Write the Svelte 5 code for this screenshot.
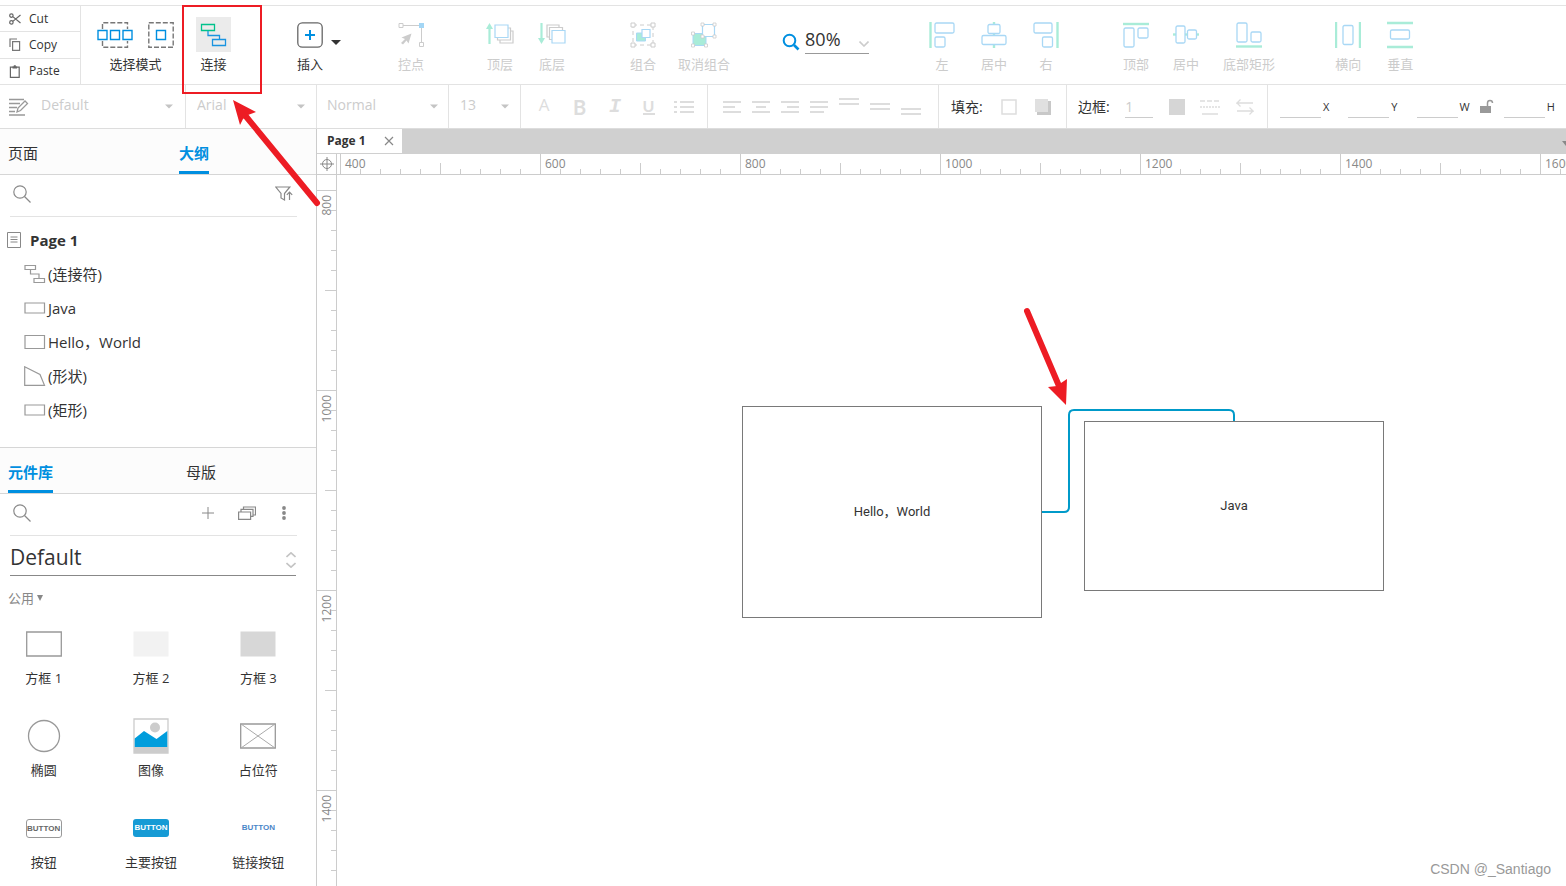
<script>
  let zoom = '80%'
  let library = 'Default'
  let width = 0
  let height = 0

  const outline = [
    { icon: 'connector', name: '(连接符)' },
    { icon: 'flat', name: 'Java' },
    { icon: 'rect', name: 'Hello，World' },
    { icon: 'shape', name: '(形状)' },
    { icon: 'flat', name: '(矩形)' }
  ]

  const widgets = [
    { icon: 'box1', name: '方框 1' },
    { icon: 'box2', name: '方框 2' },
    { icon: 'box3', name: '方框 3' },
    { icon: 'ellipse', name: '椭圆' },
    { icon: 'image', name: '图像' },
    { icon: 'placeholder', name: '占位符' },
    { icon: 'button', name: '按钮' },
    { icon: 'primary', name: '主要按钮' },
    { icon: 'link', name: '链接按钮' }
  ]

  // one tick every 20px, a label every 200px
  function ticks(offset, first, length) {
    return Array.from({ length: Math.max(0, Math.ceil((length - offset) / 20)) }, (_, i) => ({
      at: offset + i * 20,
      label: i % 10 === 0 ? first + i * 20 : null,
      size: i % 10 === 0 ? 20 : i % 5 === 0 ? 11 : 5
    }))
  }

  $: across = ticks(3, 400, width - 20)
  $: down = ticks(15, 800, height - 21)

  const alignX = [
    { name: '左', icon: 'left' },
    { name: '居中', icon: 'center' },
    { name: '右', icon: 'right' }
  ]
  const alignY = [
    { name: '顶部', icon: 'top' },
    { name: '居中', icon: 'middle' },
    { name: '底部矩形', icon: 'bottom' }
  ]
  const textAlign = [
    { name: 'Align left', d: 'M0 2h18M0 7h12M0 12h18' },
    { name: 'Align center', d: 'M0 2h18M4 7h10M0 12h18' },
    { name: 'Align right', d: 'M0 2h18M6 7h12M0 12h18' },
    { name: 'Justify', d: 'M0 2h18M0 7h18M0 12h14' }
  ]
  const verticalAlign = [
    { name: 'Align top', d: 'M0 1h20M0 6h20' },
    { name: 'Align middle', d: 'M0 6h20M0 11h20' },
    { name: 'Align bottom', d: 'M0 11h20M0 16h20' }
  ]
</script>

{#snippet caret()}
  <svg class="caret" width="10" height="5" viewBox="0 0 10 5"><path d="M0 0h10L5 5z" fill="currentColor" /></svg>
{/snippet}

{#snippet search()}
  <svg width="18" height="18" viewBox="0 0 18 18" fill="none" stroke="#8a8a8a" stroke-width="1.2">
    <circle cx="7" cy="7" r="6.2" /><path d="M11.5 11.5l6 6" />
  </svg>
{/snippet}

<div class="app">
  <header class="toolbar">
    <div class="clipboard">
      <button>
        <svg width="12" height="12" viewBox="0 0 12 12" fill="none" stroke="#666" stroke-width="1.2">
          <circle cx="2.4" cy="2.6" r="1.7" /><circle cx="2.4" cy="9.4" r="1.7" /><path d="M3.8 3.6L11.5 10M3.8 8.4L11.5 2" />
        </svg>
        Cut
      </button>
      <button>
        <svg width="12" height="13" viewBox="0 0 12 13" fill="none" stroke="#777" stroke-width="1.2">
          <path d="M1 9V1h7M3.6 3.6h7v8.8h-7z" />
        </svg>
        Copy
      </button>
      <button>
        <svg width="12" height="13" viewBox="0 0 12 13" fill="none" stroke="#666" stroke-width="1.2">
          <path d="M1.4 2.2h8.8v10.2H1.4z" /><path d="M3.5 2.4h4.6M5.8.2v2" stroke-width="2" />
        </svg>
        Paste
      </button>
    </div>

    <button class="tool modes">
      <span class="icon">
        <svg width="36" height="26" viewBox="0 0 36 26" fill="none">
          <path d="M5.5 7V.8h25V7M5.5 19v6.2h25V19" stroke="#777" stroke-width="1.4" stroke-dasharray="5 2" />
          <path d="M1 8.5h9v9H1zM13.5 8.5h9v9h-9zM26 8.5h9v9h-9z" stroke="#008fe0" stroke-width="1.4" />
        </svg>
        <svg width="26" height="26" viewBox="0 0 26 26" fill="none">
          <path d="M.8.8h24.4v24.4H.8z" stroke="#777" stroke-width="1.4" stroke-dasharray="5 2" />
          <path d="M8.5 8.5h9v9h-9z" stroke="#008fe0" stroke-width="1.4" />
        </svg>
      </span>
      选择模式
    </button>

    <button class="tool connect">
      <span class="icon active">
        <svg width="35" height="35" viewBox="0 0 35 35" fill="none" stroke-width="1.3">
          <path d="M5.5 7.5h13v6h-13z" stroke="#00c28c" />
          <path d="M12 14v4.5h11.500V22M16.500 22.500h13v6h-13z" stroke="#1a94e0" />
        </svg>
      </span>
      连接
    </button>

    <div class="group insert">
      <button class="tool">
        <span class="icon">
          <svg width="26" height="26" viewBox="0 0 26 26" fill="none">
            <rect x=".8" y=".8" width="24.4" height="24.4" rx="4.5" stroke="#666" stroke-width="1.3" />
            <path d="M13 8v10M8 13h10" stroke="#008fe0" stroke-width="2" />
          </svg>
        </span>
        插入
      </button>
      <button class="more" aria-label="插入">{@render caret()}</button>
    </div>

    <div class="group">
      <button class="tool" disabled>
        <span class="icon">
          <svg width="26" height="26" viewBox="0 0 26 26" fill="none" stroke="#ccc">
            <path d="M5 3.5h16M23.5 6v15" /><path d="M1 1.5h4v4H1zM21.5 20.5h4v4h-4z" />
            <path d="M21 1h5v5h-5z" fill="#a3d6f5" stroke="none" />
            <path d="M13.5 11.5l-10 4 3.5 1.5-4 4 2 1.5 3.5-4 2 3z" fill="#ccc" stroke="none" />
          </svg>
        </span>
        控点
      </button>
    </div>

    <div class="group layers">
      <button class="tool" disabled>
        <span class="icon">
          <svg width="28" height="26" viewBox="0 0 28 26" fill="#fff" stroke-width="1.2">
            <path d="M14 9h13v12H14z" stroke="#ccc" /><path d="M11.5 6h13v12h-13z" stroke="#ccc" /><path d="M9 3h13v12.5H9z" stroke="#a9d8f5" />
            <path d="M3.5 22V6" stroke="#a9ecd8" stroke-width="2.2" /><path d="M0 7l3.5-6L7 7z" fill="#a9ecd8" />
          </svg>
        </span>
        顶层
      </button>
      <button class="tool" disabled>
        <span class="icon">
          <svg width="28" height="26" viewBox="0 0 28 26" fill="#fff" stroke-width="1.2">
            <path d="M9 3h12v12H9z" stroke="#ccc" /><path d="M11.5 5.5h13v12h-13z" stroke="#ccc" /><path d="M14 8.5h13V21H14z" stroke="#a9d8f5" />
            <path d="M3.5 1v16" stroke="#a9ecd8" stroke-width="2.2" /><path d="M0 16l3.5 6L7 16z" fill="#a9ecd8" />
          </svg>
        </span>
        底层
      </button>
    </div>

    <div class="group combine">
      <button class="tool" disabled>
        <span class="icon">
          <svg width="26" height="26" viewBox="0 0 26 26" fill="#fff">
            <path d="M3 3h20v20H3z" stroke="#ccc" stroke-dasharray="4 3" />
            <path d="M6.5 11h9v8h-9z" fill="#a9ecd8" stroke="#a9d8f5" /><path d="M12 7.5h8v8h-8z" stroke="#a9d8f5" stroke-width="1.2" />
            <path d="M1 1h4v4H1zM21 1h4v4h-4zM1 21h4v4H1zM21 21h4v4h-4z" stroke="#ccc" />
          </svg>
        </span>
        组合
      </button>
      <button class="tool" disabled>
        <span class="icon">
          <svg width="26" height="26" viewBox="0 0 26 26" fill="#fff">
            <path d="M2 11.5h13v12H2z" fill="#a9ecd8" stroke="#a9d8f5" /><path d="M11.5 2.5h12v12h-12z" stroke="#a9d8f5" stroke-width="1.2" />
            <path d="M10 1h3v3h-3zM22 1h3v3h-3zM10 13h3v3h-3zM22 13h3v3h-3zM.5 10h3v3h-3zM.5 22h3v3h-3zM13.5 22h3v3h-3z" stroke="#ccc" stroke-width=".8" />
          </svg>
        </span>
        取消组合
      </button>
    </div>

    <div class="zoom">
      <svg width="18" height="18" viewBox="0 0 18 18" fill="none" stroke="#008fe0">
        <circle cx="7.5" cy="7.5" r="5.8" stroke-width="2" /><path d="M12 12l4.5 4.5" stroke-width="2.6" />
      </svg>
      <span class="zoom-box">
        <input aria-label="Zoom" bind:value={zoom}>
        <svg width="10" height="6" viewBox="0 0 10 6" fill="none" stroke="#ccc" stroke-width="1.6"><path d="M.5.5L5 5 9.5.5" /></svg>
      </span>
    </div>

    {#each [alignX, alignY] as set, i}
      <div class="group" class:near={i == 0} class:edges={i == 1}>
        {#each set as item}
          <button class="tool" disabled>
            <span class="icon">
              <svg width="26" height="26" viewBox="0 0 26 26" fill="#fff" stroke="#a9d8f5" stroke-width="1.3">
                {#if item.icon == 'left'}
                  <path d="M1.5 0v26" stroke="#a9ecd8" stroke-width="2.4" />
                  <rect x="6" y="1" width="19" height="10" rx="1.5" /><rect x="6" y="15" width="10" height="10" rx="1.5" />
                {:else if item.icon == 'center'}
                  <path d="M13 0v26" stroke="#a9ecd8" stroke-width="2.4" />
                  <rect x="7" y="2.5" width="12" height="9" rx="1.5" /><rect x="1" y="13.5" width="24" height="9" rx="1.5" />
                {:else if item.icon == 'right'}
                  <path d="M24.5 0v26" stroke="#a9ecd8" stroke-width="2.4" />
                  <rect x="1" y="1" width="18" height="10" rx="1.5" /><rect x="9.5" y="15" width="10" height="10" rx="1.5" />
                {:else if item.icon == 'top'}
                  <path d="M0 2h26" stroke="#a9ecd8" stroke-width="2.4" />
                  <rect x="1" y="6" width="10" height="19" rx="1.5" /><rect x="15" y="6" width="10" height="10" rx="1.5" />
                {:else if item.icon == 'middle'}
                  <path d="M0 12.5h26" stroke="#a9ecd8" stroke-width="2.4" />
                  <rect x="3" y="4" width="9" height="17" rx="1.5" /><rect x="14.5" y="8" width="9" height="9" rx="1.5" />
                {:else}
                  <path d="M0 24.5h26" stroke="#a9ecd8" stroke-width="2.4" />
                  <rect x="1" y="1" width="10" height="19" rx="1.5" /><rect x="15" y="10" width="10" height="10" rx="1.5" />
                {/if}
              </svg>
            </span>
            {item.name}
          </button>
        {/each}
      </div>
    {/each}

    <div class="group near">
      <button class="tool" disabled>
        <span class="icon">
          <svg width="26" height="26" viewBox="0 0 26 26" fill="none">
            <path d="M1 0v26M25 0v26" stroke="#a9ecd8" stroke-width="2.4" />
            <rect x="8" y="3.5" width="10" height="19" rx="1.5" stroke="#a9d8f5" stroke-width="1.3" />
          </svg>
        </span>
        横向
      </button>
      <button class="tool" disabled>
        <span class="icon">
          <svg width="26" height="28" viewBox="0 0 26 28" fill="none">
            <path d="M0 2h26M0 26h26" stroke="#a9ecd8" stroke-width="2.4" />
            <rect x="3.5" y="9" width="19" height="9" rx="1.5" stroke="#a9d8f5" stroke-width="1.3" />
          </svg>
        </span>
        垂直
      </button>
    </div>
  </header>

  <div class="stylebar">
    <div class="cell style-name">
      <svg width="20" height="18" viewBox="0 0 20 18" fill="none" stroke="#999" stroke-width="1.3">
        <path d="M0 1.5h15M0 5.5h11M0 9.5h8M0 13.5h6M0 17h16" />
        <path d="M8 14l1-4L16 3l2.5 2.5-7 7z" fill="#fff" />
      </svg>
      <select disabled aria-label="Style"><option>Default</option></select>{@render caret()}
    </div>
    <div class="cell font-name"><select disabled aria-label="Font"><option>Arial</option></select>{@render caret()}</div>
    <div class="cell font-weight"><select disabled aria-label="Weight"><option>Normal</option></select>{@render caret()}</div>
    <div class="cell font-size"><select disabled aria-label="Size"><option>13</option></select>{@render caret()}</div>
    <div class="cell letters">
      <button disabled class="color">A</button>
      <button disabled class="bold">B</button>
      <button disabled class="italic">I</button>
      <button disabled class="underline">U</button>
      <button disabled aria-label="List">
        <svg width="20" height="14" viewBox="0 0 20 14" stroke="#ddd" stroke-width="2.2">
          <path d="M6 2h14M6 7h14M6 12h14M0 2h3M0 7h3M0 12h3" />
        </svg>
      </button>
    </div>
    <div class="cell aligns">
      {#each textAlign as a}
        <button disabled aria-label={a.name}><svg width="18" height="14" viewBox="0 0 18 14" stroke="#ddd" stroke-width="2"><path d={a.d} /></svg></button>
      {/each}
      {#each verticalAlign as a}
        <button disabled aria-label={a.name}><svg width="20" height="18" viewBox="0 0 20 18" stroke="#ddd" stroke-width="2"><path d={a.d} /></svg></button>
      {/each}
    </div>
    <div class="cell fill">
      填充:
      <button disabled aria-label="Fill"><svg width="16" height="16" viewBox="0 0 16 16"><path d="M1 1h14v14H1z" fill="none" stroke="#ddd" stroke-width="1.5" /></svg></button>
      <button disabled aria-label="Shadow"><svg width="16" height="16" viewBox="0 0 16 16"><path d="M2 2h14v14H2z" fill="#c8c8c8" /><path d="M0 0h13v13H0z" fill="#e0e0e0" /></svg></button>
    </div>
    <div class="cell border">
      <label for="border-width">边框:</label>
      <input id="border-width" disabled value="1">
      <button disabled aria-label="Border color"><svg width="16" height="16" viewBox="0 0 16 16"><path d="M0 0h16v16H0z" fill="#d6d6d6" /></svg></button>
      <button disabled aria-label="Border style">
        <svg width="20" height="16" viewBox="0 0 20 16" stroke="#ddd" stroke-width="1.5">
          <path d="M0 2h20" stroke-dasharray="5 2" /><path d="M0 8h20" stroke-dasharray="2 1" /><path d="M2 15h16" />
        </svg>
      </button>
      <button disabled aria-label="Line ends">
        <svg width="18" height="16" viewBox="0 0 18 16" fill="none" stroke="#ddd" stroke-width="1.3">
          <path d="M17 4H1l3.5-3.5M1 4l3.5 3.5M1 12h16l-3.5-3.5M17 12l-3.5 3.5" />
        </svg>
      </button>
    </div>
    <div class="cell position">
      <label><input disabled>X</label>
      <label><input disabled>Y</label>
      <label><input disabled>W</label>
      <button class="lock" disabled aria-label="Lock ratio">
        <svg width="14" height="15" viewBox="0 0 14 15"><path d="M0 7h11v7H0z" fill="#999" /><path d="M7.5 7V4c0-3.5 5-3.5 5 0" fill="none" stroke="#999" stroke-width="1.5" /></svg>
      </button>
      <label><input disabled>H</label>
    </div>
  </div>

  <div class="workspace">
    <aside>
      <nav class="tabs">
        <button>页面</button>
        <button class="current">大纲</button>
      </nav>
      <div class="searchbar">
        <button aria-label="Search">{@render search()}</button>
        <span class="grow"></span>
        <button aria-label="Filter">
          <svg width="18" height="16" viewBox="0 0 18 16" fill="none" stroke="#888" stroke-width="1.2">
            <path d="M.8 1h14L9.5 7.5V14L6 12V7.5z" /><path d="M14.5 14V6M11.8 8.8L14.5 6l2.7 2.8" />
          </svg>
        </button>
      </div>
      <ul class="outline">
        <li class="page">
          <svg width="14" height="16" viewBox="0 0 14 16" fill="none" stroke="#888"><path d="M.5.5h13v15H.5z" /><path d="M3.5 5h7M3.5 7.5h7M3.5 10h7" /></svg>
          Page 1
        </li>
        {#each outline as item}
          <li>
            <svg width="22" height="20" viewBox="0 0 22 20" fill="none" stroke="#999" stroke-width="1.2">
              {#if item.icon == 'connector'}
                <path d="M1 1.5h10.5v4H1zM6.5 5.5v4.5H15v4M10 14.5h10.5v4H10z" />
              {:else if item.icon == 'flat'}
                <path d="M1 5h19.5v10H1z" />
              {:else if item.icon == 'rect'}
                <path d="M1 3.5h19.5v13H1z" />
              {:else}
                <path d="M.7.7L16 8.5 20.5 19.3H.7z" />
              {/if}
            </svg>
            {item.name}
          </li>
        {/each}
      </ul>

      <nav class="tabs lower">
        <button class="current">元件库</button>
        <button>母版</button>
      </nav>
      <div class="searchbar">
        <button aria-label="Search">{@render search()}</button>
        <span class="grow"></span>
        <button aria-label="Add"><svg width="12" height="12" viewBox="0 0 12 12" stroke="#888"><path d="M6 0v12M0 6h12" /></svg></button>
        <button aria-label="Libraries" class="stack">
          <svg width="18" height="14" viewBox="0 0 18 14" fill="#fff" stroke="#888" stroke-width="1.2"><path d="M5.5 1h12v8h-12z" /><path d="M3 3.3h12v7H3z" /><path d="M.6 6h12v7.4H.6z" /></svg>
        </button>
        <button aria-label="More" class="dots">
          <svg width="4" height="14" viewBox="0 0 4 14" fill="#888"><circle cx="2" cy="2" r="1.9" /><circle cx="2" cy="7" r="1.9" /><circle cx="2" cy="12" r="1.9" /></svg>
        </button>
      </div>
      <div class="library">
        <select aria-label="Library" bind:value={library}><option>Default</option></select>
        <svg width="10" height="16" viewBox="0 0 10 16" fill="none" stroke="#c4c4c4" stroke-width="1.6"><path d="M.5 5L5 .8 9.5 5M.5 11L5 15.2 9.5 11" /></svg>
      </div>
      <button class="category">公用 <svg width="6" height="6" viewBox="0 0 6 6"><path d="M0 0h6L3 6z" fill="#888" /></svg></button>
      <ul class="widgets">
        {#each widgets as w}
          <li>
            {#if w.icon == 'button' || w.icon == 'primary' || w.icon == 'link'}
              <span class="sample"><b class={w.icon}>BUTTON</b></span>
            {:else}
              <svg class="sample" width="36" height="36" viewBox="0 0 36 36" fill="none" stroke="#999" stroke-width="1.3">
                {#if w.icon == 'box1'}
                  <path d="M.7 6h34.6v24H.7z" />
                {:else if w.icon == 'box2'}
                  <path d="M.5 5.5h35v25H.5z" fill="#f2f2f2" stroke="none" />
                {:else if w.icon == 'box3'}
                  <path d="M.5 5.5h35v25H.5z" fill="#d7d7d7" stroke="none" />
                {:else if w.icon == 'ellipse'}
                  <circle cx="18" cy="18" r="15.5" />
                {:else if w.icon == 'image'}
                  <path d="M1 1h34v34H1z" stroke="#ccc" /><path d="M1 29h34v6H1z" fill="#ccc" stroke="none" />
                  <circle cx="22" cy="9.5" r="5" fill="#ccc" stroke="none" />
                  <path d="M1.7 20.5L11 13l12.5 8L34.3 13v16H1.7z" fill="#009ddc" stroke="none" />
                {:else}
                  <path d="M.7 6h34.6v24H.7z" /><path d="M1 6l34 24M35 6L1 30" stroke-width="1" stroke="#aaa" />
                {/if}
              </svg>
            {/if}
            {w.name}
          </li>
        {/each}
      </ul>
    </aside>

    <main>
      <div class="pages">
        <div class="page-tab">
          Page 1
          <button aria-label="Close"><svg width="10" height="10" viewBox="0 0 10 10" stroke="#888" stroke-width="1.2"><path d="M1 1l8 8M9 1L1 9" /></svg></button>
        </div>
        <button class="page-menu" aria-label="Pages"><svg width="4" height="5" viewBox="0 0 4 5"><path d="M0 0h4v5z" fill="#888" /></svg></button>
      </div>
      <div class="rulers" bind:clientWidth={width} bind:clientHeight={height}>
        <div class="corner">
          <svg width="14" height="14" viewBox="0 0 14 14" fill="none" stroke="#888"><circle cx="7" cy="7" r="4.5" /><path d="M7 0v14M0 7h14" /></svg>
        </div>
        <svg class="ruler-x">
          {#each across as t}
            <path d="M{t.at}.5 {20 - t.size}v{t.size}" />
            {#if t.label}<text x={t.at + 5} y="14">{t.label}</text>{/if}
          {/each}
        </svg>
        <svg class="ruler-y">
          {#each down as t}
            <path d="M{19 - t.size} {t.at}.5h{t.size}" />
            {#if t.label}<text transform="translate(14 {t.at + 5}) rotate(-90)" text-anchor="end">{t.label}</text>{/if}
          {/each}
        </svg>
        <div class="canvas">
          <svg class="wire" width="194" height="107" viewBox="0 0 194 107" fill="none" stroke="#009ac9" stroke-width="2">
            <path d="M0 105h22q5 0 5-5V8q0-5 5-5h155q5 0 5 5v7" />
          </svg>
          <div class="node hello">Hello，World</div>
          <div class="node java">Java</div>
        </div>
      </div>
      <div class="watermark">CSDN @_Santiago</div>
    </main>
  </div>

  <svg class="marks" width="1100" height="420" viewBox="0 0 1100 420" fill="#ed1c24" stroke="#ed1c24" aria-hidden="true">
    <path d="M183 6h78v87h-78z" fill="none" stroke-width="2" />
    <path d="M317 203L244 114M1027 311L1059 386" stroke-width="6" stroke-linecap="round" />
    <path d="M233 100l23 12-8 3-5 4-3 6zM1066 405l-18-18 9-1 4-3 6-4z" stroke="none" />
  </svg>
</div>

<style>
:global(body) {
  margin: 0;
}

.app {
  position: relative;
  box-sizing: border-box;
  display: flex;
  flex-direction: column;
  min-height: 100vh;
  padding-top: 5px;
  overflow: hidden;
  background: #fff;
  color: #333;
  font: 13px/20px "Open Sans", "Noto Sans CJK SC", sans-serif;
}

button, input, select {
  margin: 0;
  padding: 0;
  border: 0;
  background: none;
  color: inherit;
  font: inherit;
}

select {
  appearance: none;
  opacity: 1;
}

svg {
  display: block;
  flex: none;
}

ul {
  margin: 0;
  padding: 0;
  list-style: none;
}

.toolbar {
  display: flex;
  height: 78px;
  border-top: 1px solid #e3e3e3;
  border-bottom: 1px solid #e3e3e3;
}

.clipboard {
  display: flex;
  flex-direction: column;
  width: 80px;
  border-right: 1px solid #e3e3e3;
  font-size: 12px;
}

.clipboard button {
  display: flex;
  flex: 1;
  align-items: center;
  gap: 8px;
  padding-left: 9px;
}

.clipboard button + button {
  border-top: 1px solid #e3e3e3;
}

.tool {
  display: flex;
  flex: none;
  flex-direction: column;
  align-items: center;
  padding-top: 11px;
  white-space: nowrap;
}

.tool:disabled {
  color: #ccc;
}

.icon {
  display: flex;
  align-items: center;
  justify-content: center;
  gap: 15px;
  height: 35px;
  margin-bottom: 2px;
}

.active {
  background: #ebebeb;
}

.modes {
  margin-left: 16px;
}

.connect {
  margin-left: 22px;
}

.group {
  display: flex;
  flex: none;
  align-items: flex-start;
  gap: 26px;
  margin-left: 64px;
}

.group.insert {
  gap: 8px;
  margin-left: 66px;
}

.insert + .group {
  margin-left: 57px;
}

.group.layers {
  gap: 24px;
  margin-left: 62px;
}

.group.combine {
  gap: 22px;
}

.group.near {
  margin-left: 60px;
}

.group.edges {
  gap: 24px;
}

.more {
  padding-top: 34px;
}

.zoom {
  display: flex;
  align-items: flex-start;
  gap: 5px;
  margin-left: 52px;
  padding-top: 20px;
}

.zoom > svg {
  margin-top: 7px;
}

.zoom-box {
  display: flex;
  align-items: center;
  border-bottom: 1px solid #999;
}

.zoom-box input {
  width: 54px;
  height: 25px;
  padding-bottom: 2px;
  font-size: 18px;
}

.zoom-box svg {
  margin-top: 8px;
}

.stylebar {
  display: flex;
  height: 43px;
  border-bottom: 1px solid #ddd;
}

.cell {
  box-sizing: border-box;
  display: flex;
  flex: none;
  align-items: center;
  border-right: 1px solid #e3e3e3;
}

.cell select {
  flex: 1;
  min-width: 0;
  height: 40px;
  margin-bottom: 3px;
  color: #ccc;
  font-size: 14px;
}

.cell .caret {
  width: 8px;
  color: #c4c4c4;
}

.style-name {
  width: 186px;
  gap: 12px;
  padding: 0 12px 0 9px;
}

.font-name {
  width: 131px;
  padding: 0 11px;
}

.font-weight {
  width: 132px;
  padding: 0 10px;
}

.font-size {
  width: 72px;
  padding: 0 11px;
}

.letters {
  width: 187px;
  justify-content: space-between;
  padding: 0 13px 0 15px;
  color: #ddd;
}

.letters button {
  width: 16px;
  text-align: center;
}

.letters button:last-child {
  width: 20px;
}

.color {
  padding-bottom: 4px;
  font-size: 17px;
}

.bold {
  font: bold 20px/20px Lato, sans-serif;
}

.italic {
  font: italic bold 20px/20px "Liberation Mono", monospace;
}

.letters .underline {
  width: 12px;
  border-bottom: 2px solid #ddd;
  font: bold 16px/14px Lato, sans-serif;
}

.aligns {
  width: 231px;
  justify-content: space-between;
  padding: 0 17px 0 15px;
}

.fill {
  width: 128px;
  justify-content: space-between;
  padding: 0 15px 0 12px;
  font-size: 14px;
}

.border {
  width: 201px;
  justify-content: space-between;
  padding: 0 13px 0 11px;
  font-size: 14px;
}

.border input {
  width: 28px;
  height: 22px;
  border-bottom: 1px solid #ccc;
  color: #ccc;
}

.position {
  flex: 1;
  gap: 19px;
  padding: 0 12px;
  border: 0;
  font-size: 11px;
}

.position label {
  display: flex;
  align-items: center;
  gap: 2px;
}

.position input {
  width: 41px;
  height: 22px;
  border-bottom: 1px solid #ccc;
}

.lock {
  margin: 0 -9px;
}

.workspace {
  display: flex;
  flex: 1;
}

aside {
  flex: none;
  width: 316px;
  border-right: 1px solid #ccc;
}

.tabs {
  display: flex;
  height: 45px;
  padding-left: 8px;
  border-bottom: 1px solid #d6d6d6;
  background: #fcfcfc;
  font-size: 15px;
}

.tabs button {
  flex: none;
  margin-right: 141px;
  padding-top: 6px;
  border-bottom: 3px solid transparent;
  white-space: nowrap;
}

.tabs button:last-child {
  margin-right: 0;
}

.tabs .current {
  border-color: #008fe0;
  color: #008fe0;
  font-weight: bold;
}

.tabs.lower {
  border-top: 1px solid #d6d6d6;
}

.lower button {
  margin-right: 133px;
}

.searchbar {
  box-sizing: border-box;
  display: flex;
  align-items: center;
  height: 42px;
  margin: 0 19px 0 10px;
  padding: 0 4px 3px 3px;
  border-bottom: 1px solid #e3e3e3;
}

.grow {
  flex: 1;
}

.stack {
  margin: 0 26px 0 24px;
}

.dots {
  margin-right: 7px;
}

.outline {
  padding: 6px 0 20px;
  font-size: 15px;
}

.outline li {
  display: flex;
  align-items: center;
  gap: 2px;
  height: 34px;
  padding-left: 24px;
}

.outline .page {
  gap: 9px;
  padding-left: 7px;
  font-weight: bold;
}

.library {
  display: flex;
  align-items: center;
  height: 39px;
  margin: 0 20px 0 10px;
  border-bottom: 1px solid #888;
}

.library select {
  flex: 1;
  height: 36px;
  padding-top: 3px;
  font-size: 21px;
}

.library svg {
  margin-top: 8px;
}

.category {
  display: flex;
  align-items: center;
  gap: 3px;
  margin: 12px 0 0 8px;
  color: #888;
}

.widgets {
  display: grid;
  grid-template-columns: repeat(3, 1fr);
  gap: 30px 0;
  padding: 18px 4px 10px 0;
  margin-left: -10px;
}

.widgets li {
  display: flex;
  flex-direction: column;
  align-items: center;
  gap: 6px;
}

.sample {
  display: flex;
  align-items: center;
  height: 36px;
}

.sample b {
  box-sizing: border-box;
  width: 36px;
  border-radius: 3px;
  font: bold 8px/18px "Liberation Sans", sans-serif;
  text-align: center;
}

.sample .button {
  border: 1px solid #999;
  color: #666;
  line-height: 17px;
}

.sample .primary {
  background: #169bd5;
  color: #fff;
}

.sample .link {
  color: #4a86c8;
}

main {
  position: relative;
  display: flex;
  flex: 1;
  flex-direction: column;
  min-width: 0;
}

.pages {
  display: flex;
  align-items: flex-start;
  justify-content: space-between;
  height: 25px;
  background: #d0d0d0;
}

.page-tab {
  display: flex;
  align-items: center;
  gap: 18px;
  height: 24px;
  padding: 0 8px 0 10px;
  background: #fff;
  font-size: 12px;
  font-weight: bold;
}

.page-menu {
  padding-top: 12px;
}

.rulers {
  display: grid;
  flex: 1;
  grid-template: 21px 1fr / 20px 1fr;
}

.corner {
  display: flex;
  align-items: center;
  justify-content: center;
  border-right: 1px solid #ccc;
  border-bottom: 1px solid #ccc;
}

.ruler-x, .ruler-y {
  box-sizing: border-box;
  width: 100%;
  overflow: hidden;
  fill: #888;
  stroke: #ccc;
  font-size: 12px;
}

.ruler-x text, .ruler-y text {
  stroke: none;
}

.ruler-x {
  height: 100%;
  border-bottom: 1px solid #ccc;
}

.ruler-y {
  height: 0;
  min-height: 100%;
  border-right: 1px solid #ccc;
}

.canvas {
  position: relative;
  font: 13px/20px Roboto, "Noto Sans CJK SC", sans-serif;
}

.node {
  position: absolute;
  box-sizing: border-box;
  display: flex;
  align-items: center;
  justify-content: center;
  width: 300px;
  border: 1px solid #797979;
  background: #fff;
}

.hello {
  top: 231px;
  left: 405px;
  height: 212px;
}

.java {
  top: 246px;
  left: 747px;
  height: 170px;
}

.wire {
  position: absolute;
  top: 232px;
  left: 705px;
}

.watermark {
  position: absolute;
  right: 15px;
  bottom: 7px;
  color: #999;
  font: 14px/20px "Liberation Sans", sans-serif;
}

.marks {
  position: absolute;
  top: 0;
  left: 0;
  pointer-events: none;
}
</style>
